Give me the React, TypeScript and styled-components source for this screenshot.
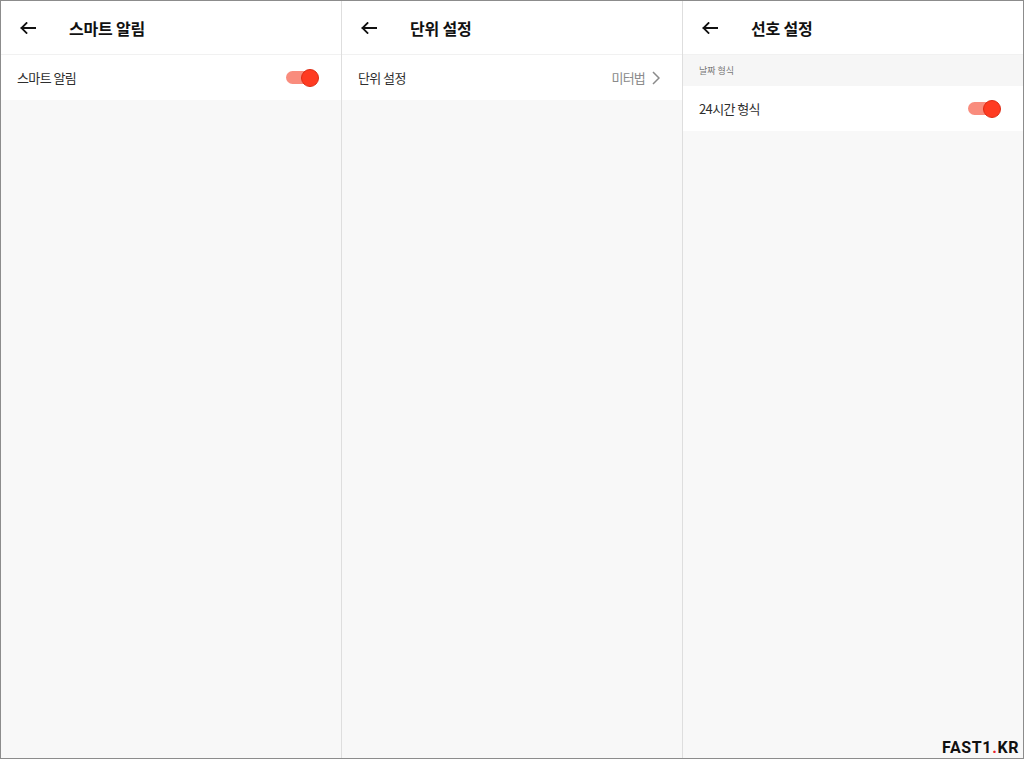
import React from "react";
import styled, { createGlobalStyle } from "styled-components";

const GlobalStyle = createGlobalStyle`
  html, body {
    margin: 0;
    padding: 0;
    background: #ffffff;
  }
  body {
    font-family: "Noto Sans CJK KR", "Noto Sans", Roboto, sans-serif;
  }
  * {
    box-sizing: border-box;
  }
`;

const Frame = styled.div`
  position: relative;
  width: 1024px;
  height: 759px;
  border: 1px solid #8c8c8c;
  display: grid;
  grid-template-columns: 1fr 1px 1fr 1px 1fr;
  background: #f8f8f8;
  overflow: hidden;
`;

const Divider = styled.div`
  background: #dedede;
`;

const Panel = styled.section`
  display: flex;
  flex-direction: column;
  background: #f8f8f8;
  min-width: 0;
`;

const Header = styled.header`
  height: 54px;
  display: flex;
  align-items: center;
  gap: 33px;
  padding-left: 19px;
  background: #ffffff;
  border-bottom: 1px solid #f1f1f1;
`;

const BackButton = styled.button`
  border: 0;
  padding: 0;
  background: none;
  width: 16px;
  height: 14px;
  display: flex;
  align-items: center;
  cursor: pointer;
`;

const Title = styled.h1`
  margin: 0;
  font-size: 16px;
  font-weight: 700;
  color: #111111;
  letter-spacing: -0.2px;
`;

const SectionLabel = styled.div`
  height: 31px;
  display: flex;
  align-items: center;
  padding-left: 16px;
  font-size: 9px;
  color: #777777;
  background: #f6f6f6;
`;

const Row = styled.div`
  height: 45px;
  display: flex;
  align-items: center;
  justify-content: space-between;
  padding: 0 22px 0 16px;
  background: #ffffff;
`;

const RowLabel = styled.span`
  font-size: 13px;
  color: #2e2e2e;
  letter-spacing: -0.6px;
`;

const Value = styled.span`
  display: flex;
  align-items: center;
  gap: 7px;
  font-size: 13px;
  color: #8a8a8a;
  letter-spacing: -0.8px;
`;

const Track = styled.span<{ $on: boolean }>`
  position: relative;
  display: inline-block;
  width: 30px;
  height: 13px;
  margin-right: 3px;
  border-radius: 7px;
  background: ${(p) => (p.$on ? "#f98c7d" : "#c8c8c8")};
`;

const Thumb = styled.span<{ $on: boolean }>`
  position: absolute;
  top: 50%;
  ${(p) => (p.$on ? "right: -3px;" : "left: -3px;")}
  width: 18px;
  height: 18px;
  margin-top: -9px;
  border-radius: 50%;
  background: ${(p) => (p.$on ? "#ff3b21" : "#f1f1f1")};
  border: 1px solid ${(p) => (p.$on ? "#dd2c15" : "#bbbbbb")};
`;

const Watermark = styled.div`
  position: absolute;
  right: 4px;
  bottom: 1px;
  font-family: Roboto, "Liberation Sans", sans-serif;
  font-weight: 700;
  font-size: 16px;
  color: #111111;
  letter-spacing: 0.6px;
`;

const Dot = styled.span`
  color: #e8202a;
`;

const BackArrow = () => (
  <svg width="16" height="12" viewBox="0 0 16 12" fill="none">
    <path
      d="M16 6H1.5M6.5 1L1.5 6l5 5"
      stroke="#111111"
      strokeWidth="1.8"
      strokeLinecap="square"
    />
  </svg>
);

const Chevron = () => (
  <svg width="8" height="14" viewBox="0 0 8 14" fill="none">
    <path d="M1 1l6 6-6 6" stroke="#8a8a8a" strokeWidth="1.5" />
  </svg>
);

const Toggle = ({ on }: { on: boolean }) => (
  <Track $on={on}>
    <Thumb $on={on} />
  </Track>
);

const PanelHeader = ({ title }: { title: string }) => (
  <Header>
    <BackButton aria-label="뒤로">
      <BackArrow />
    </BackButton>
    <Title>{title}</Title>
  </Header>
);

export default function App() {
  return (
    <>
      <GlobalStyle />
      <Frame>
        <Panel>
          <PanelHeader title="스마트 알림" />
          <Row>
            <RowLabel>스마트 알림</RowLabel>
            <Toggle on />
          </Row>
        </Panel>
        <Divider />
        <Panel>
          <PanelHeader title="단위 설정" />
          <Row>
            <RowLabel>단위 설정</RowLabel>
            <Value>
              미터법
              <Chevron />
            </Value>
          </Row>
        </Panel>
        <Divider />
        <Panel>
          <PanelHeader title="선호 설정" />
          <SectionLabel>날짜 형식</SectionLabel>
          <Row>
            <RowLabel>24시간 형식</RowLabel>
            <Toggle on />
          </Row>
        </Panel>
        <Watermark>
          FAST1<Dot>.</Dot>KR
        </Watermark>
      </Frame>
    </>
  );
}
